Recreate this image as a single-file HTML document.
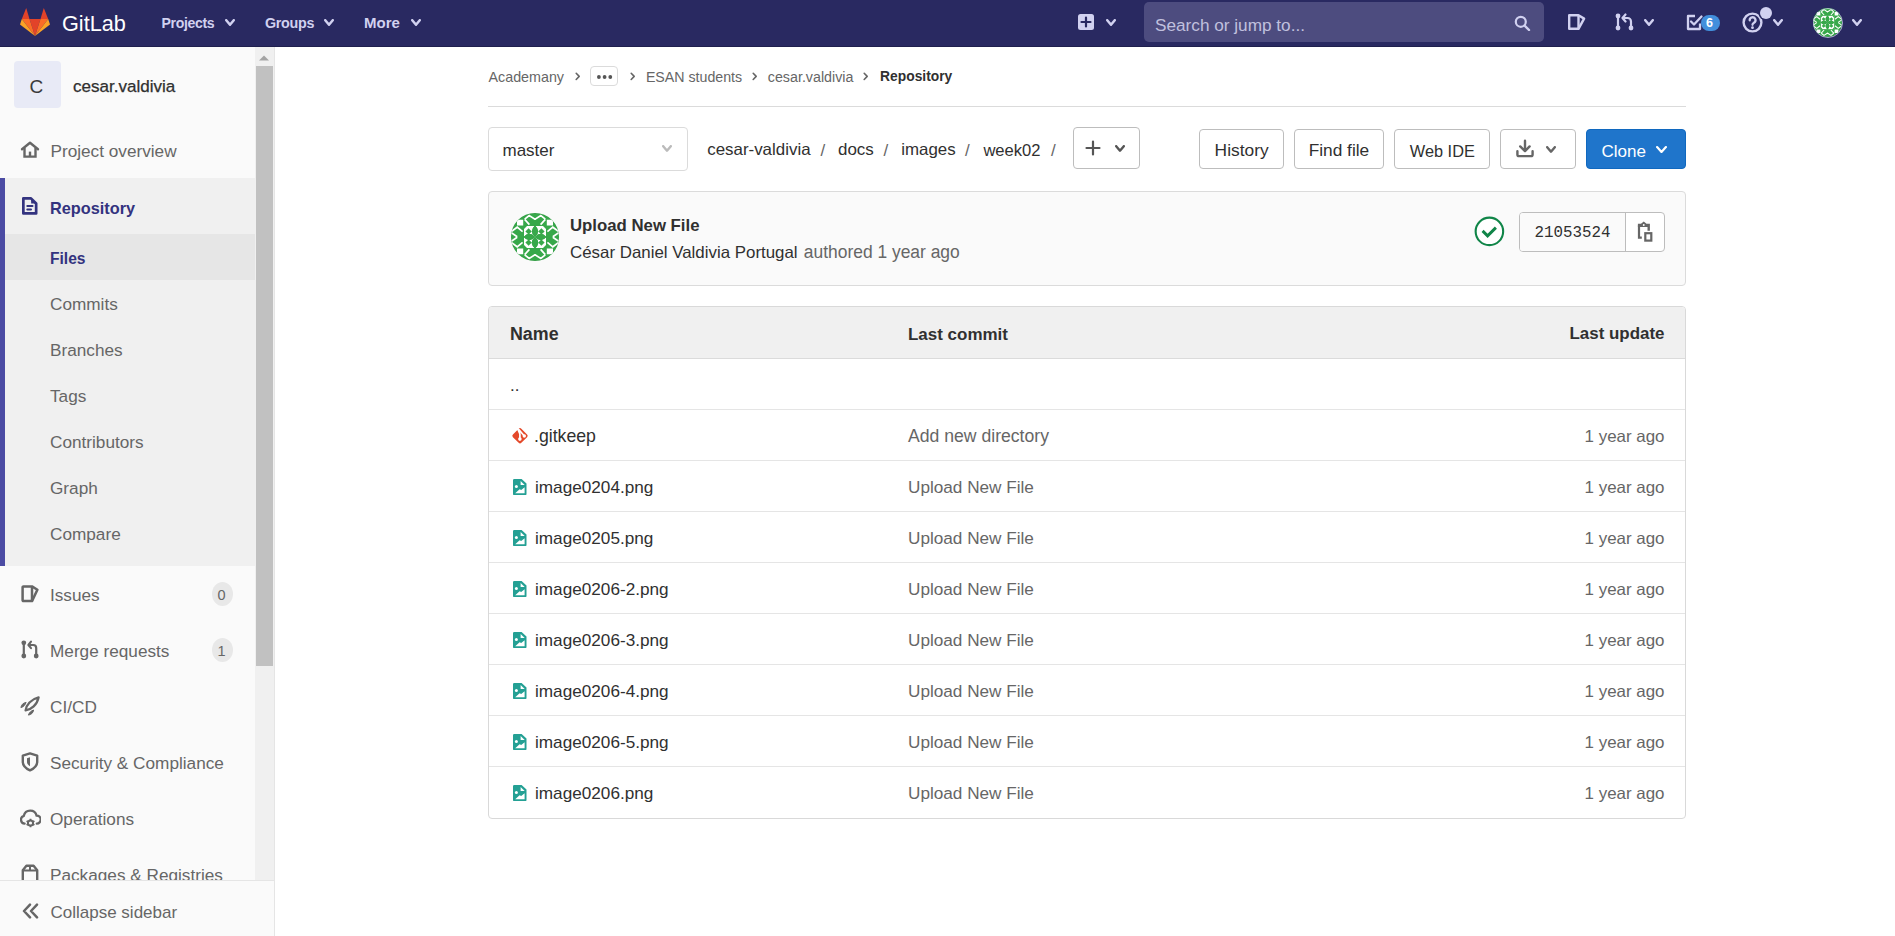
<!DOCTYPE html>
<html><head><meta charset="utf-8">
<style>
*{box-sizing:border-box;margin:0;padding:0}
html,body{width:1895px;height:936px;overflow:hidden;background:#fff;font-family:"Liberation Sans",sans-serif;color:#303030}
.r{position:absolute;display:block}
.t{position:absolute;white-space:nowrap;line-height:1}
</style></head><body>
<div class="r" style="left:0px;top:0px;width:1895px;height:47px;background:#292961;border-bottom:1px solid #1f1f4d"></div>
<svg class="r" style="left:20px;top:8px" width="30" height="28" viewBox="0 0 30 28">
<polygon points="15,28 20.5,11 9.5,11" fill="#e24329"/>
<polygon points="15,28 9.5,11 1.8,11" fill="#fc6d26"/>
<polygon points="1.8,11 0,16.5 15,28" fill="#fca326"/>
<polygon points="1.8,11 9.5,11 6.2,0" fill="#e24329"/>
<polygon points="15,28 20.5,11 28.2,11" fill="#fc6d26"/>
<polygon points="28.2,11 30,16.5 15,28" fill="#fca326"/>
<polygon points="28.2,11 20.5,11 23.8,0" fill="#e24329"/></svg>
<div class="t" style="left:62.00px;top:12.63px;font-size:21.7px;color:#fff;font-weight:normal;">GitLab</div>
<div class="t" style="left:161.50px;top:15.86px;font-size:14.1px;color:#d1d1f0;font-weight:bold;letter-spacing:-0.35px">Projects</div>
<svg class="r" style="left:225px;top:19px" width="10" height="7" viewBox="0 0 10 7"><polyline points="1.25,1.25 5.0,5.75 8.75,1.25" fill="none" stroke="#d1d1f0" stroke-width="2.5" stroke-linecap="round" stroke-linejoin="round"/></svg>
<div class="t" style="left:265.00px;top:15.70px;font-size:14.3px;color:#d1d1f0;font-weight:bold;letter-spacing:-0.3px">Groups</div>
<svg class="r" style="left:324px;top:19px" width="10" height="7" viewBox="0 0 10 7"><polyline points="1.25,1.25 5.0,5.75 8.75,1.25" fill="none" stroke="#d1d1f0" stroke-width="2.5" stroke-linecap="round" stroke-linejoin="round"/></svg>
<div class="t" style="left:364.00px;top:15.10px;font-size:15px;color:#d1d1f0;font-weight:bold;">More</div>
<svg class="r" style="left:411px;top:19px" width="10" height="7" viewBox="0 0 10 7"><polyline points="1.25,1.25 5.0,5.75 8.75,1.25" fill="none" stroke="#d1d1f0" stroke-width="2.5" stroke-linecap="round" stroke-linejoin="round"/></svg>
<svg class="r" style="left:1078px;top:14px" width="16" height="16" viewBox="0 0 16 16"><rect x="0" y="0" width="16" height="16" rx="2.5" fill="#d1d1f0"/><path d="M8 3.5v9M3.5 8h9" stroke="#292961" stroke-width="2.2" stroke-linecap="round"/></svg>
<svg class="r" style="left:1106px;top:19px" width="10" height="7" viewBox="0 0 10 7"><polyline points="1.25,1.25 5.0,5.75 8.75,1.25" fill="none" stroke="#d1d1f0" stroke-width="2.5" stroke-linecap="round" stroke-linejoin="round"/></svg>
<div class="r" style="left:1144px;top:2px;width:400px;height:40px;background:#4d4c7f;border-radius:5px"></div>
<div class="t" style="left:1155.00px;top:16.64px;font-size:17.2px;color:#c0c0de;font-weight:normal;">Search or jump to...</div>
<svg class="r" style="left:1514px;top:15px" width="17" height="16" viewBox="0 0 17 16"><circle cx="6.8" cy="6.8" r="5" fill="none" stroke="#d1d1f0" stroke-width="2.2"/><path d="M10.5 10.5L15 15" stroke="#d1d1f0" stroke-width="2.4" stroke-linecap="round"/></svg>
<svg class="r" style="left:1567px;top:13px" width="19" height="18" viewBox="0 0 19 18"><path d="M2.2 2.2h9.3l5.6 3.4-5.6 10.2H2.2z" fill="none" stroke="#d1d1f0" stroke-width="2.4" stroke-linejoin="round"/><path d="M11.5 2.2v13.6" stroke="#d1d1f0" stroke-width="2.4"/></svg>
<svg class="r" style="left:1615px;top:13px" width="20" height="18" viewBox="0 0 20 18"><circle cx="3" cy="3" r="2.4" fill="#d1d1f0"/><circle cx="3" cy="15" r="2.4" fill="#d1d1f0"/><circle cx="16" cy="15" r="2.4" fill="#d1d1f0"/><path d="M3 3v12M16 15V8.5a3.5 3.5 0 0 0-3.5-3.5H9" fill="none" stroke="#d1d1f0" stroke-width="2.2"/><path d="M10.5 1.5L7.5 5l3 3.5" fill="none" stroke="#d1d1f0" stroke-width="2.2" stroke-linejoin="round" stroke-linecap="round"/></svg>
<svg class="r" style="left:1644px;top:19px" width="10" height="7" viewBox="0 0 10 7"><polyline points="1.25,1.25 5.0,5.75 8.75,1.25" fill="none" stroke="#d1d1f0" stroke-width="2.5" stroke-linecap="round" stroke-linejoin="round"/></svg>
<svg class="r" style="left:1686px;top:14px" width="18" height="17" viewBox="0 0 18 17"><path d="M9 2H2v13h12V9.5" fill="none" stroke="#d1d1f0" stroke-width="2.3" stroke-linejoin="round"/><path d="M5 7.5l3 3 7.5-8" fill="none" stroke="#d1d1f0" stroke-width="2.3" stroke-linecap="round" stroke-linejoin="round"/></svg>
<div class="r" style="left:1700.5px;top:15px;width:19.5px;height:15.5px;background:#428fdc;border-radius:8px"></div>
<div class="t" style="left:1706.00px;top:16.92px;font-size:12.5px;color:#fff;font-weight:bold;">6</div>
<svg class="r" style="left:1742px;top:12px" width="22" height="21" viewBox="0 0 22 21"><circle cx="10.5" cy="10.5" r="8.9" fill="none" stroke="#d1d1f0" stroke-width="2.4"/><path d="M7.7 8.3a2.9 2.9 0 1 1 4.3 2.4c-.9.6-1.5 1-1.5 2.1" fill="none" stroke="#d1d1f0" stroke-width="2.3" stroke-linecap="round"/><circle cx="10.5" cy="15.7" r="1.4" fill="#d1d1f0"/></svg>
<div class="r" style="left:1759.5px;top:6.5px;width:12px;height:12px;background:#d1d1f0;border-radius:50%;box-shadow:0 0 0 1.5px #292961"></div>
<svg class="r" style="left:1773px;top:19px" width="10" height="7" viewBox="0 0 10 7"><polyline points="1.25,1.25 5.0,5.75 8.75,1.25" fill="none" stroke="#d1d1f0" stroke-width="2.5" stroke-linecap="round" stroke-linejoin="round"/></svg>
<svg class="r" style="left:1813px;top:8px" width="29" height="29" viewBox="0 0 48 48"><defs><clipPath id="ch"><circle cx="24" cy="24" r="24"/></clipPath></defs>
<g clip-path="url(#ch)">
<rect width="48" height="48" fill="#37a84a"/>
<g id="wh" fill="#fff" stroke="#fff">
<polygon points="6,6.8 12.2,6.8 12.2,12.4 6,12.4" stroke="none"/>
<polyline points="0.3,18.6 6.2,14.2 11.6,18.6" fill="none" stroke-width="1.7"/>
<polyline points="0.3,19.6 6.2,23.8" fill="none" stroke-width="1.7"/>
<polyline points="13.7,6.2 18.2,2.6 23.5,6.0 25,6.0" fill="none" stroke-width="1.7"/>
<polyline points="13.7,6.4 18.4,11.6" fill="none" stroke-width="1.7"/>
<rect x="13" y="13" width="11" height="11" stroke="none"/>
</g><use href="#wh" transform="translate(48,0) scale(-1,1)"/><use href="#wh" transform="translate(0,48) scale(1,-1)"/><use href="#wh" transform="translate(48,48) scale(-1,-1)"/><g id="gh" fill="#37a84a">
<path d="M24 12.6 Q30.4 18.4 24 24 Q17.6 18.4 24 12.6z"/>
<path d="M12.6 24 Q18.4 17.6 24 24 Q18.4 30.4 12.6 24z"/>
<polygon points="17.6,15.2 20.8,18.4 17.6,21.6 14.4,18.4"/><polygon points="13,13 16,13 13,16"/>
</g><use href="#gh" transform="translate(48,0) scale(-1,1)"/><use href="#gh" transform="translate(0,48) scale(1,-1)"/><use href="#gh" transform="translate(48,48) scale(-1,-1)"/>
</g><circle cx="24" cy="24" r="23.6" fill="none" stroke="rgba(0,0,0,0.08)" stroke-width="0.8"/></svg>
<div class="r" style="left:1812.5px;top:7.5px;width:30px;height:30px;border-radius:50%;border:1px solid rgba(209,209,240,0.75)"></div>
<svg class="r" style="left:1852px;top:19px" width="10" height="7" viewBox="0 0 10 7"><polyline points="1.25,1.25 5.0,5.75 8.75,1.25" fill="none" stroke="#d1d1f0" stroke-width="2.5" stroke-linecap="round" stroke-linejoin="round"/></svg>
<div class="r" style="left:0px;top:47px;width:275px;height:889px;background:#fafafa;border-right:1px solid #e5e5e5"></div>
<div class="r" style="left:14px;top:61px;width:47px;height:47px;background:#e8eaf6;border-radius:4px"></div>
<div class="t" style="left:29.50px;top:76.52px;font-size:19px;color:#3a3a3a;font-weight:normal;">C</div>
<div class="t" style="left:73.00px;top:78.07px;font-size:17.05px;color:#303030;font-weight:normal;-webkit-text-stroke:0.25px #303030">cesar.valdivia</div>
<svg class="r" style="left:20px;top:141px" width="20" height="17" viewBox="0 0 20 17"><path d="M2 8.2L10 1.8l8 6.4" fill="none" stroke="#666" stroke-width="2.4" stroke-linecap="round" stroke-linejoin="round"/><path d="M4.5 7v8.6h11V7" fill="none" stroke="#666" stroke-width="2.4"/><path d="M10 15.6v-5" stroke="#666" stroke-width="2.4"/></svg>
<div class="t" style="left:50.50px;top:143.44px;font-size:17.2px;color:#666;font-weight:normal;">Project overview</div>
<div class="r" style="left:0px;top:178px;width:255px;height:388px;background:#f0f0f0"></div>
<div class="r" style="left:0px;top:178px;width:5px;height:388px;background:#4b4ba3"></div>
<svg class="r" style="left:22px;top:197px" width="16" height="18" viewBox="0 0 16 18"><path d="M1.35 1.35H9L14.15 6.5V16.4H1.35z" fill="none" stroke="#33337f" stroke-width="2.7" stroke-linejoin="round"/><polygon points="9,1.3 14.2,6.4 9.2,6.4" fill="#33337f"/><path d="M5.3 8.9H10.5M5.3 12.6H9" stroke="#33337f" stroke-width="2" stroke-linecap="round"/></svg>
<div class="t" style="left:50.00px;top:199.80px;font-size:16.3px;color:#33337f;font-weight:bold;">Repository</div>
<div class="r" style="left:5px;top:234px;width:250px;height:46px;background:#e6e6e6"></div>
<div class="t" style="left:50.00px;top:251.09px;font-size:15.6px;color:#33337f;font-weight:bold;">Files</div>
<div class="t" style="left:50.00px;top:296.04px;font-size:17.2px;color:#666;font-weight:normal;">Commits</div>
<div class="t" style="left:50.00px;top:342.04px;font-size:17.2px;color:#666;font-weight:normal;">Branches</div>
<div class="t" style="left:50.00px;top:388.04px;font-size:17.2px;color:#666;font-weight:normal;">Tags</div>
<div class="t" style="left:50.00px;top:434.04px;font-size:17.2px;color:#666;font-weight:normal;">Contributors</div>
<div class="t" style="left:50.00px;top:480.04px;font-size:17.2px;color:#666;font-weight:normal;">Graph</div>
<div class="t" style="left:50.00px;top:526.04px;font-size:17.2px;color:#666;font-weight:normal;">Compare</div>
<div class="t" style="left:50.00px;top:586.54px;font-size:17.2px;color:#666;font-weight:normal;">Issues</div>
<div class="t" style="left:50.00px;top:642.54px;font-size:17.2px;color:#666;font-weight:normal;">Merge requests</div>
<div class="t" style="left:50.00px;top:698.54px;font-size:17.2px;color:#666;font-weight:normal;">CI/CD</div>
<div class="t" style="left:50.00px;top:754.54px;font-size:17.2px;color:#666;font-weight:normal;">Security &amp; Compliance</div>
<div class="t" style="left:50.00px;top:810.54px;font-size:17.2px;color:#666;font-weight:normal;">Operations</div>
<div class="t" style="left:50.00px;top:866.54px;font-size:17.2px;color:#666;font-weight:normal;">Packages &amp; Registries</div>
<svg class="r" style="left:21px;top:585px" width="18" height="18" viewBox="0 0 18 18"><path d="M1.6 2.2a0.8 0.8 0 0 1 .8-.8h8.6l5.4 3.3-5.4 11.4H2.4a0.8 0.8 0 0 1-.8-.8z" fill="none" stroke="#666" stroke-width="2.5" stroke-linejoin="round"/><path d="M11 1.6v14.6" stroke="#666" stroke-width="2.5"/></svg>
<svg class="r" style="left:21px;top:640px" width="18" height="19" viewBox="0 0 18 19"><circle cx="2.8" cy="2.8" r="2.4" fill="#666"/><circle cx="2.8" cy="16" r="2.4" fill="#666"/><circle cx="15.2" cy="16" r="2.4" fill="#666"/><path d="M2.8 2.8v13.2M15.2 16V8a3 3 0 0 0-3-3H9" fill="none" stroke="#666" stroke-width="2.2"/><path d="M10 1.6L7.4 5l2.6 3.2" fill="none" stroke="#666" stroke-width="2.1" stroke-linejoin="round" stroke-linecap="round"/></svg>
<svg class="r" style="left:20px;top:696px" width="20" height="20" viewBox="0 0 20 20"><path d="M5.6 14.4C6.2 9 11 3.2 18.6 1.3C17.2 8.8 11.2 13.8 5.6 14.4z" fill="none" stroke="#666" stroke-width="2.3" stroke-linejoin="round"/><path d="M0.9 11.6C1.3 8.8 3 7 6.1 6.4C5.1 9.1 3.5 10.9 0.9 11.6z" fill="#666" stroke="#666" stroke-width="1" stroke-linejoin="round"/><path d="M8.4 19.1C11.4 18.6 13.1 16.9 13.6 14C11 14.9 9.2 16.6 8.4 19.1z" fill="#666" stroke="#666" stroke-width="1" stroke-linejoin="round"/></svg>
<svg class="r" style="left:21px;top:752px" width="18" height="20" viewBox="0 0 18 20"><path d="M9 1.4L1.8 3.6v6.2c0 3.6 2.8 6.6 7.2 8.6 4.4-2 7.2-5 7.2-8.6V3.6z" fill="none" stroke="#666" stroke-width="2.4" stroke-linejoin="round"/><path d="M9 5.2L6 6.2v3.6c0 1.8.8 3.2 3 4.4z" fill="#666"/></svg>
<svg class="r" style="left:20px;top:808px" width="21" height="20" viewBox="0 0 21 20"><path d="M4.6 15.6A4 4 0 0 1 3.8 7.8 6.6 6.6 0 0 1 16.6 7.6a4 4 0 0 1 .2 8" fill="none" stroke="#666" stroke-width="2.3" stroke-linecap="round"/><circle cx="10.5" cy="15" r="2.6" fill="none" stroke="#666" stroke-width="2"/><path d="M10.5 10.8v1.6M10.5 17.6v1.6M6.6 13l1.4.8M13 16.2l1.4.8M6.6 17l1.4-.8M13 13.8l1.4-.8" stroke="#666" stroke-width="1.8"/></svg>
<svg class="r" style="left:21px;top:864px" width="18" height="18" viewBox="0 0 18 18"><path d="M1.8 17V6.2L5.4 1.8h7.2l3.6 4.4V17" fill="none" stroke="#666" stroke-width="2.4" stroke-linejoin="round"/><path d="M1.8 6.4h14.4M9 1.8v4.6" stroke="#666" stroke-width="2"/></svg>
<div class="r" style="left:212px;top:582px;width:21px;height:24px;background:#e8e8e8;border-radius:50%"></div>
<div class="t" style="left:217.50px;top:588.23px;font-size:14.5px;color:#666;font-weight:normal;">0</div>
<div class="r" style="left:212px;top:638px;width:21px;height:24px;background:#e8e8e8;border-radius:50%"></div>
<div class="t" style="left:217.50px;top:644.23px;font-size:14.5px;color:#666;font-weight:normal;">1</div>
<div class="r" style="left:255px;top:47px;width:19px;height:833px;background:#f0f0f0"></div>
<svg class="r" style="left:258px;top:54px" width="12" height="8" viewBox="0 0 12 8"><polygon points="6,1.5 11,6.5 1,6.5" fill="#a3a3a3"/></svg>
<div class="r" style="left:256px;top:66px;width:17px;height:600px;background:#c1c1c1"></div>
<div class="r" style="left:0px;top:880px;width:274px;height:56px;background:#fafafa;border-top:1px solid #e5e5e5"></div>
<svg class="r" style="left:22px;top:903px" width="17" height="16" viewBox="0 0 17 16"><path d="M8 1.6L2 8l6 6.4M15 1.6L9 8l6 6.4" fill="none" stroke="#666" stroke-width="2.5" stroke-linecap="round" stroke-linejoin="round"/></svg>
<div class="t" style="left:50.50px;top:904.21px;font-size:17px;color:#666;font-weight:normal;">Collapse sidebar</div>
<div class="t" style="left:488.50px;top:69.70px;font-size:14.3px;color:#666;font-weight:normal;">Academany</div>
<svg class="r" style="left:574.5px;top:71.5px" width="6" height="10" viewBox="0 0 6 10"><polyline points="1.2,1.3 4.2,4.4 1.2,7.5" fill="none" stroke="#666" stroke-width="1.6" stroke-linecap="round" stroke-linejoin="round"/></svg>
<div class="r" style="left:590px;top:66px;width:28px;height:20px;border:1px solid #dbdbdb;border-radius:4px;background:#fff"></div>
<svg class="r" style="left:597px;top:73.5px" width="16" height="6" viewBox="0 0 16 6"><circle cx="1.9" cy="3" r="1.9" fill="#555"/><circle cx="7.6" cy="3" r="1.9" fill="#555"/><circle cx="13.3" cy="3" r="1.9" fill="#555"/></svg>
<svg class="r" style="left:629.5px;top:71.5px" width="6" height="10" viewBox="0 0 6 10"><polyline points="1.2,1.3 4.2,4.4 1.2,7.5" fill="none" stroke="#666" stroke-width="1.6" stroke-linecap="round" stroke-linejoin="round"/></svg>
<div class="t" style="left:645.90px;top:69.78px;font-size:14.2px;color:#666;font-weight:normal;">ESAN students</div>
<svg class="r" style="left:751.8px;top:71.5px" width="6" height="10" viewBox="0 0 6 10"><polyline points="1.2,1.3 4.2,4.4 1.2,7.5" fill="none" stroke="#666" stroke-width="1.6" stroke-linecap="round" stroke-linejoin="round"/></svg>
<div class="t" style="left:767.80px;top:69.71px;font-size:14.28px;color:#666;font-weight:normal;">cesar.valdivia</div>
<svg class="r" style="left:863px;top:71.5px" width="6" height="10" viewBox="0 0 6 10"><polyline points="1.2,1.3 4.2,4.4 1.2,7.5" fill="none" stroke="#666" stroke-width="1.6" stroke-linecap="round" stroke-linejoin="round"/></svg>
<div class="t" style="left:880.10px;top:70.10px;font-size:13.82px;color:#303030;font-weight:bold;">Repository</div>
<div class="r" style="left:488px;top:106px;width:1198px;height:1px;background:#dbdbdb"></div>
<div class="r" style="left:488px;top:127px;width:200px;height:44px;border:1px solid #dbdbdb;border-radius:4px;background:#fff"></div>
<div class="t" style="left:502.50px;top:142.21px;font-size:17px;color:#303030;font-weight:normal;">master</div>
<svg class="r" style="left:662px;top:145.2px" width="10" height="6.9" viewBox="0 0 10 6.9"><polyline points="1.2,1.2 5.0,5.7 8.8,1.2" fill="none" stroke="#bbb" stroke-width="2.4" stroke-linecap="round" stroke-linejoin="round"/></svg>
<div class="t" style="left:707.20px;top:142.29px;font-size:16.91px;color:#303030;font-weight:normal;">cesar-valdivia</div>
<div class="t" style="left:820.50px;top:142.21px;font-size:17px;color:#666;font-weight:normal;">/</div>
<div class="t" style="left:838.00px;top:142.23px;font-size:16.97px;color:#303030;font-weight:normal;">docs</div>
<div class="t" style="left:883.50px;top:142.21px;font-size:17px;color:#666;font-weight:normal;">/</div>
<div class="t" style="left:901.20px;top:142.30px;font-size:16.89px;color:#303030;font-weight:normal;">images</div>
<div class="t" style="left:965.00px;top:142.21px;font-size:17px;color:#666;font-weight:normal;">/</div>
<div class="t" style="left:983.40px;top:142.56px;font-size:16.59px;color:#303030;font-weight:normal;">week02</div>
<div class="t" style="left:1051.00px;top:142.21px;font-size:17px;color:#666;font-weight:normal;">/</div>
<div class="r" style="left:1073px;top:127px;width:67px;height:42px;border:1px solid #bdbdbd;border-radius:4px;background:#fff"></div>
<svg class="r" style="left:1085px;top:140px" width="16" height="16" viewBox="0 0 16 16"><path d="M8 1.5v13M1.5 8h13" stroke="#555" stroke-width="2.2" stroke-linecap="round"/></svg>
<svg class="r" style="left:1115px;top:144.8px" width="10" height="6.9" viewBox="0 0 10 6.9"><polyline points="1.2,1.2 5.0,5.7 8.8,1.2" fill="none" stroke="#555" stroke-width="2.4" stroke-linecap="round" stroke-linejoin="round"/></svg>
<div class="r" style="left:1199px;top:129px;width:85px;height:40px;border:1px solid #bdbdbd;border-radius:4px;background:#fff"></div>
<div class="t" style="left:1214.60px;top:142.30px;font-size:17.36px;color:#303030;font-weight:normal;">History</div>
<div class="r" style="left:1294px;top:129px;width:90px;height:40px;border:1px solid #bdbdbd;border-radius:4px;background:#fff"></div>
<div class="t" style="left:1308.70px;top:142.36px;font-size:17.29px;color:#303030;font-weight:normal;">Find file</div>
<div class="r" style="left:1394px;top:129px;width:96px;height:40px;border:1px solid #bdbdbd;border-radius:4px;background:#fff"></div>
<div class="t" style="left:1409.80px;top:143.18px;font-size:16.33px;color:#303030;font-weight:normal;">Web IDE</div>
<div class="r" style="left:1500px;top:129px;width:76px;height:40px;border:1px solid #bdbdbd;border-radius:4px;background:#fff"></div>
<svg class="r" style="left:1515px;top:139px" width="20" height="19" viewBox="0 0 20 19"><path d="M10 1.8V11.6M5.2 7.4L10 12.1 14.6 7.4" fill="none" stroke="#666" stroke-width="2.4" stroke-linecap="round" stroke-linejoin="round"/><path d="M2.4 12.2V15.4Q2.4 17.1 4.1 17.1H15.9Q17.6 17.1 17.6 15.4V12.2" fill="none" stroke="#666" stroke-width="2.4" stroke-linecap="round" stroke-linejoin="round"/></svg>
<svg class="r" style="left:1546px;top:145.8px" width="10" height="6.9" viewBox="0 0 10 6.9"><polyline points="1.2,1.2 5.0,5.7 8.8,1.2" fill="none" stroke="#666" stroke-width="2.4" stroke-linecap="round" stroke-linejoin="round"/></svg>
<div class="r" style="left:1586px;top:129px;width:100px;height:40px;background:#1f75cb;border:1px solid #1068bf;border-radius:4px"></div>
<div class="t" style="left:1601.50px;top:142.57px;font-size:17.05px;color:#fff;font-weight:normal;">Clone</div>
<svg class="r" style="left:1655.5px;top:145.5px" width="11" height="7" viewBox="0 0 11 7"><polyline points="1.1,1.1 5.5,5.9 9.9,1.1" fill="none" stroke="#fff" stroke-width="2.2" stroke-linecap="round" stroke-linejoin="round"/></svg>
<div class="r" style="left:488px;top:191px;width:1198px;height:95px;background:#fafafa;border:1px solid #dbdbdb;border-radius:4px"></div>
<svg class="r" style="left:510.5px;top:212.5px" width="48" height="48" viewBox="0 0 48 48"><defs><clipPath id="cc"><circle cx="24" cy="24" r="24"/></clipPath></defs>
<g clip-path="url(#cc)">
<rect width="48" height="48" fill="#37a84a"/>
<g id="wc" fill="#fff" stroke="#fff">
<polygon points="6,6.8 12.2,6.8 12.2,12.4 6,12.4" stroke="none"/>
<polyline points="0.3,18.6 6.2,14.2 11.6,18.6" fill="none" stroke-width="1.7"/>
<polyline points="0.3,19.6 6.2,23.8" fill="none" stroke-width="1.7"/>
<polyline points="13.7,6.2 18.2,2.6 23.5,6.0 25,6.0" fill="none" stroke-width="1.7"/>
<polyline points="13.7,6.4 18.4,11.6" fill="none" stroke-width="1.7"/>
<rect x="13" y="13" width="11" height="11" stroke="none"/>
</g><use href="#wc" transform="translate(48,0) scale(-1,1)"/><use href="#wc" transform="translate(0,48) scale(1,-1)"/><use href="#wc" transform="translate(48,48) scale(-1,-1)"/><g id="gc" fill="#37a84a">
<path d="M24 12.6 Q30.4 18.4 24 24 Q17.6 18.4 24 12.6z"/>
<path d="M12.6 24 Q18.4 17.6 24 24 Q18.4 30.4 12.6 24z"/>
<polygon points="17.6,15.2 20.8,18.4 17.6,21.6 14.4,18.4"/><polygon points="13,13 16,13 13,16"/>
</g><use href="#gc" transform="translate(48,0) scale(-1,1)"/><use href="#gc" transform="translate(0,48) scale(1,-1)"/><use href="#gc" transform="translate(48,48) scale(-1,-1)"/>
</g><circle cx="24" cy="24" r="23.6" fill="none" stroke="rgba(0,0,0,0.08)" stroke-width="0.8"/></svg>
<div class="t" style="left:570.00px;top:218.40px;font-size:16.77px;color:#303030;font-weight:bold;">Upload New File</div>
<div class="t" style="left:570.00px;top:244.90px;font-size:16.89px;color:#303030;font-weight:normal;">César Daniel Valdivia Portugal</div>
<div class="t" style="left:803.80px;top:244.45px;font-size:17.43px;color:#666;font-weight:normal;">authored 1 year ago</div>
<svg class="r" style="left:1473.5px;top:215.5px" width="31" height="31" viewBox="0 0 31 31"><circle cx="15.4" cy="15.4" r="13.75" fill="#fff" stroke="#108548" stroke-width="2.1"/><path d="M8.6 14.9L13.6 19.9 21.9 11.6" fill="none" stroke="#108548" stroke-width="2.9" stroke-linejoin="miter"/></svg>
<div class="r" style="left:1519px;top:212px;width:146px;height:40px;border:1px solid #bdbdbd;border-radius:4px;background:#fff;overflow:hidden"></div>
<div class="r" style="left:1520px;top:213px;width:105px;height:38px;background:#fafafa;border-radius:3px 0 0 3px"></div>
<div class="r" style="left:1625px;top:213px;width:1px;height:38px;background:#bdbdbd"></div>
<div class="t" style="left:1534.60px;top:226.20px;font-size:15.83px;color:#303030;font-weight:normal;font-family:'Liberation Mono',monospace">21053524</div>
<svg class="r" style="left:1636px;top:220px" width="18" height="23" viewBox="0 0 18 23"><path d="M3 5.2V17.7H5.8" fill="none" stroke="#666" stroke-width="2.2"/><path d="M1.9 6.9V3.7H5L7.75 1.5 10.5 3.7H13.9V10.8H11.5V6.9z" fill="#666"/><circle cx="7.75" cy="5" r="0.95" fill="#fff"/><rect x="9.3" y="13.2" width="6" height="7.4" fill="none" stroke="#666" stroke-width="2.2"/></svg>
<div class="r" style="left:488px;top:306px;width:1198px;height:513px;border:1px solid #d9d9d9;border-radius:4px;background:#fff;overflow:hidden"></div>
<div class="r" style="left:489px;top:307px;width:1196px;height:51px;background:#f0f0f0;border-radius:3px 3px 0 0"></div>
<div class="r" style="left:489px;top:358px;width:1196px;height:1px;background:#dbdbdb"></div>
<div class="t" style="left:510.00px;top:326.11px;font-size:17.83px;color:#303030;font-weight:bold;">Name</div>
<div class="t" style="left:908.00px;top:325.83px;font-size:16.98px;color:#303030;font-weight:bold;">Last commit</div>
<div class="t" style="right:230.50px;top:325.87px;font-size:16.93px;color:#303030;font-weight:bold;">Last update</div>
<div class="t" style="left:510.00px;top:377.21px;font-size:17px;color:#303030;font-weight:normal;">..</div>
<div class="r" style="left:489px;top:409px;width:1196px;height:1px;background:#e5e5e5"></div>
<svg class="r" style="left:511px;top:427px" width="18" height="18" viewBox="0 0 18 18"><rect x="3.05" y="2.85" width="11.9" height="11.9" rx="1.9" transform="rotate(45 9 8.8)" fill="#e4492a"/><path d="M6.6 1.6L8.9 7V12.1M7.6 2.3L13.3 9" fill="none" stroke="#fff" stroke-width="1.7" stroke-linecap="round"/><circle cx="8.9" cy="12.1" r="1.8" fill="#fff"/><circle cx="13.3" cy="9" r="1.7" fill="#fff"/></svg>
<div class="t" style="left:534.00px;top:428.31px;font-size:17.71px;color:#303030;font-weight:normal;">.gitkeep</div>
<div class="t" style="left:908.00px;top:428.38px;font-size:17.62px;color:#666;font-weight:normal;">Add new directory</div>
<div class="t" style="right:230.50px;top:428.99px;font-size:16.91px;color:#666;font-weight:normal;">1 year ago</div>
<div class="r" style="left:489px;top:460px;width:1196px;height:1px;background:#e5e5e5"></div>
<svg class="r" style="left:513.3px;top:478.9px" width="14" height="17" viewBox="0 0 14 17"><path d="M1.2 0H8.6L13.5 4.6V14.9a1.2 1.2 0 0 1-1.2 1.2H1.2A1.2 1.2 0 0 1 0 14.9V1.2A1.2 1.2 0 0 1 1.2 0z" fill="#24a094"/><path d="M7.6 2.1V5.9H11.7z" fill="#fff"/><circle cx="3.4" cy="7.4" r="1.5" fill="#fff"/><path d="M2.2 14.3L6.6 10.2 8.2 10.9 11.6 8.2V14.3z" fill="#fff"/></svg>
<div class="t" style="left:535.00px;top:478.76px;font-size:17.18px;color:#303030;font-weight:normal;">image0204.png</div>
<div class="t" style="left:908.00px;top:478.77px;font-size:17.17px;color:#666;font-weight:normal;">Upload New File</div>
<div class="t" style="right:230.50px;top:479.99px;font-size:16.91px;color:#666;font-weight:normal;">1 year ago</div>
<div class="r" style="left:489px;top:511px;width:1196px;height:1px;background:#e5e5e5"></div>
<svg class="r" style="left:513.3px;top:529.9px" width="14" height="17" viewBox="0 0 14 17"><path d="M1.2 0H8.6L13.5 4.6V14.9a1.2 1.2 0 0 1-1.2 1.2H1.2A1.2 1.2 0 0 1 0 14.9V1.2A1.2 1.2 0 0 1 1.2 0z" fill="#24a094"/><path d="M7.6 2.1V5.9H11.7z" fill="#fff"/><circle cx="3.4" cy="7.4" r="1.5" fill="#fff"/><path d="M2.2 14.3L6.6 10.2 8.2 10.9 11.6 8.2V14.3z" fill="#fff"/></svg>
<div class="t" style="left:535.00px;top:529.76px;font-size:17.18px;color:#303030;font-weight:normal;">image0205.png</div>
<div class="t" style="left:908.00px;top:529.77px;font-size:17.17px;color:#666;font-weight:normal;">Upload New File</div>
<div class="t" style="right:230.50px;top:530.99px;font-size:16.91px;color:#666;font-weight:normal;">1 year ago</div>
<div class="r" style="left:489px;top:562px;width:1196px;height:1px;background:#e5e5e5"></div>
<svg class="r" style="left:513.3px;top:580.9px" width="14" height="17" viewBox="0 0 14 17"><path d="M1.2 0H8.6L13.5 4.6V14.9a1.2 1.2 0 0 1-1.2 1.2H1.2A1.2 1.2 0 0 1 0 14.9V1.2A1.2 1.2 0 0 1 1.2 0z" fill="#24a094"/><path d="M7.6 2.1V5.9H11.7z" fill="#fff"/><circle cx="3.4" cy="7.4" r="1.5" fill="#fff"/><path d="M2.2 14.3L6.6 10.2 8.2 10.9 11.6 8.2V14.3z" fill="#fff"/></svg>
<div class="t" style="left:535.00px;top:580.76px;font-size:17.18px;color:#303030;font-weight:normal;">image0206-2.png</div>
<div class="t" style="left:908.00px;top:580.77px;font-size:17.17px;color:#666;font-weight:normal;">Upload New File</div>
<div class="t" style="right:230.50px;top:581.99px;font-size:16.91px;color:#666;font-weight:normal;">1 year ago</div>
<div class="r" style="left:489px;top:613px;width:1196px;height:1px;background:#e5e5e5"></div>
<svg class="r" style="left:513.3px;top:631.9px" width="14" height="17" viewBox="0 0 14 17"><path d="M1.2 0H8.6L13.5 4.6V14.9a1.2 1.2 0 0 1-1.2 1.2H1.2A1.2 1.2 0 0 1 0 14.9V1.2A1.2 1.2 0 0 1 1.2 0z" fill="#24a094"/><path d="M7.6 2.1V5.9H11.7z" fill="#fff"/><circle cx="3.4" cy="7.4" r="1.5" fill="#fff"/><path d="M2.2 14.3L6.6 10.2 8.2 10.9 11.6 8.2V14.3z" fill="#fff"/></svg>
<div class="t" style="left:535.00px;top:631.76px;font-size:17.18px;color:#303030;font-weight:normal;">image0206-3.png</div>
<div class="t" style="left:908.00px;top:631.77px;font-size:17.17px;color:#666;font-weight:normal;">Upload New File</div>
<div class="t" style="right:230.50px;top:632.99px;font-size:16.91px;color:#666;font-weight:normal;">1 year ago</div>
<div class="r" style="left:489px;top:664px;width:1196px;height:1px;background:#e5e5e5"></div>
<svg class="r" style="left:513.3px;top:682.9px" width="14" height="17" viewBox="0 0 14 17"><path d="M1.2 0H8.6L13.5 4.6V14.9a1.2 1.2 0 0 1-1.2 1.2H1.2A1.2 1.2 0 0 1 0 14.9V1.2A1.2 1.2 0 0 1 1.2 0z" fill="#24a094"/><path d="M7.6 2.1V5.9H11.7z" fill="#fff"/><circle cx="3.4" cy="7.4" r="1.5" fill="#fff"/><path d="M2.2 14.3L6.6 10.2 8.2 10.9 11.6 8.2V14.3z" fill="#fff"/></svg>
<div class="t" style="left:535.00px;top:682.76px;font-size:17.18px;color:#303030;font-weight:normal;">image0206-4.png</div>
<div class="t" style="left:908.00px;top:682.77px;font-size:17.17px;color:#666;font-weight:normal;">Upload New File</div>
<div class="t" style="right:230.50px;top:683.99px;font-size:16.91px;color:#666;font-weight:normal;">1 year ago</div>
<div class="r" style="left:489px;top:715px;width:1196px;height:1px;background:#e5e5e5"></div>
<svg class="r" style="left:513.3px;top:733.9px" width="14" height="17" viewBox="0 0 14 17"><path d="M1.2 0H8.6L13.5 4.6V14.9a1.2 1.2 0 0 1-1.2 1.2H1.2A1.2 1.2 0 0 1 0 14.9V1.2A1.2 1.2 0 0 1 1.2 0z" fill="#24a094"/><path d="M7.6 2.1V5.9H11.7z" fill="#fff"/><circle cx="3.4" cy="7.4" r="1.5" fill="#fff"/><path d="M2.2 14.3L6.6 10.2 8.2 10.9 11.6 8.2V14.3z" fill="#fff"/></svg>
<div class="t" style="left:535.00px;top:733.76px;font-size:17.18px;color:#303030;font-weight:normal;">image0206-5.png</div>
<div class="t" style="left:908.00px;top:733.77px;font-size:17.17px;color:#666;font-weight:normal;">Upload New File</div>
<div class="t" style="right:230.50px;top:734.99px;font-size:16.91px;color:#666;font-weight:normal;">1 year ago</div>
<div class="r" style="left:489px;top:766px;width:1196px;height:1px;background:#e5e5e5"></div>
<svg class="r" style="left:513.3px;top:784.9px" width="14" height="17" viewBox="0 0 14 17"><path d="M1.2 0H8.6L13.5 4.6V14.9a1.2 1.2 0 0 1-1.2 1.2H1.2A1.2 1.2 0 0 1 0 14.9V1.2A1.2 1.2 0 0 1 1.2 0z" fill="#24a094"/><path d="M7.6 2.1V5.9H11.7z" fill="#fff"/><circle cx="3.4" cy="7.4" r="1.5" fill="#fff"/><path d="M2.2 14.3L6.6 10.2 8.2 10.9 11.6 8.2V14.3z" fill="#fff"/></svg>
<div class="t" style="left:535.00px;top:784.76px;font-size:17.18px;color:#303030;font-weight:normal;">image0206.png</div>
<div class="t" style="left:908.00px;top:784.77px;font-size:17.17px;color:#666;font-weight:normal;">Upload New File</div>
<div class="t" style="right:230.50px;top:785.99px;font-size:16.91px;color:#666;font-weight:normal;">1 year ago</div>
</body></html>
